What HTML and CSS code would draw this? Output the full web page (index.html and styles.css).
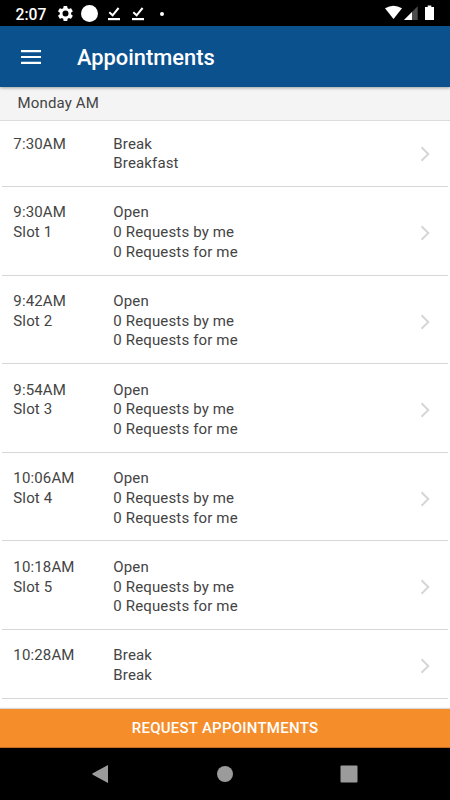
FILE: index.html
```html
<!DOCTYPE html>
<html lang="en">
<head>
<meta charset="utf-8">
<title>Appointments</title>
<link rel="stylesheet" href="styles.css">
</head>
<body>
<div class="phone">
  <div class="status">
    <span class="clock">2:07</span>
    <svg class="gear" viewBox="2 2 20 20"><path fill-rule="evenodd" d="M19.4 13a7.5 7.5 0 0 0 0-2l2.1-1.6c.2-.2.3-.4.1-.7l-2-3.4c-.1-.2-.4-.3-.6-.2l-2.500 1a7.300 7.300 0 0 0-1.700-1l-.4-2.600a.5.5 0 0 0-.5-.5h-4c-.2 0-.5.2-.5.5L9 5.100a7.700 7.700 0 0 0-1.700 1l-2.500-1c-.2-.1-.5 0-.6.2l-2 3.400c-.1.200-.1.500.1.700L4.500 11a7.500 7.500 0 0 0 0 2l-2.200 1.600c-.2.200-.2.400-.1.700l2 3.400c.1.200.4.300.6.200l2.500-1c.5.400 1.100.7 1.700 1l.4 2.600c0 .3.200.5.500.5h4c.3 0 .5-.2.500-.5l.4-2.600c.6-.3 1.200-.6 1.700-1l2.500 1c.2.100.5 0 .6-.2l2-3.400c.1-.2.100-.5-.1-.7zM12 8a4 4 0 1 1 0 8 4 4 0 0 1 0-8z"/></svg>
    <i class="disc"></i>
    <svg class="done" viewBox="0 0 12 14"><path d="M1.300 5.300l3.300 3 6-7.300" fill="none" stroke="#fff" stroke-width="2"/><path d="M0 11h12v2.200H0z"/></svg>
    <svg class="done second" viewBox="0 0 12 14"><path d="M1.300 5.300l3.300 3 6-7.300" fill="none" stroke="#fff" stroke-width="2"/><path d="M0 11h12v2.200H0z"/></svg>
    <i class="dot"></i>
    <svg class="signals" viewBox="0 0 50 16"><path d="M0 3.300Q8.500-1.900 17 3.300L8.500 14z"/><path d="M19 15L32.700 1.300V15z" fill="#4d4d4d"/><path d="M19 15l8-8v8z"/><path d="M40 2h2.700V.5h3.600V2H49v13h-9z"/></svg>
  </div>
  <header class="appbar">
    <svg class="menu" viewBox="0 0 20 14"><path d="M0 0h20v2.200H0zM0 5.900h20v2.200H0zM0 11.800h20V14H0z"/></svg>
    <h1>Appointments</h1>
  </header>
  <div class="section">Monday AM</div>
  <main class="list">
    <div class="row first"><div class="time">7:30AM</div><div class="info">Break<br>Breakfast</div><svg class="chevron" viewBox="0 0 10 16"><path d="M1.500 1.200L8.300 8l-6.800 6.800"/></svg></div>
    <div class="row"><div class="time">9:30AM<br>Slot 1</div><div class="info">Open<br>0 Requests by me<br>0 Requests for me</div><svg class="chevron" viewBox="0 0 10 16"><path d="M1.500 1.200L8.300 8l-6.800 6.800"/></svg></div>
    <div class="row"><div class="time">9:42AM<br>Slot 2</div><div class="info">Open<br>0 Requests by me<br>0 Requests for me</div><svg class="chevron" viewBox="0 0 10 16"><path d="M1.500 1.200L8.300 8l-6.800 6.800"/></svg></div>
    <div class="row"><div class="time">9:54AM<br>Slot 3</div><div class="info">Open<br>0 Requests by me<br>0 Requests for me</div><svg class="chevron" viewBox="0 0 10 16"><path d="M1.500 1.200L8.300 8l-6.800 6.800"/></svg></div>
    <div class="row"><div class="time">10:06AM<br>Slot 4</div><div class="info">Open<br>0 Requests by me<br>0 Requests for me</div><svg class="chevron" viewBox="0 0 10 16"><path d="M1.500 1.200L8.300 8l-6.800 6.800"/></svg></div>
    <div class="row"><div class="time">10:18AM<br>Slot 5</div><div class="info">Open<br>0 Requests by me<br>0 Requests for me</div><svg class="chevron" viewBox="0 0 10 16"><path d="M1.500 1.200L8.300 8l-6.800 6.800"/></svg></div>
    <div class="row"><div class="time">10:28AM</div><div class="info">Break<br>Break</div><svg class="chevron" viewBox="0 0 10 16"><path d="M1.500 1.200L8.300 8l-6.800 6.800"/></svg></div>
  </main>
  <button class="request">REQUEST APPOINTMENTS</button>
  <nav class="navbar">
    <svg viewBox="0 0 18 18"><path d="M16 0v18L.8 9.800a.9.9 0 0 1 0-1.600z"/></svg>
    <svg viewBox="0 0 18 18"><circle cx="9" cy="9" r="8"/></svg>
    <svg viewBox="0 0 18 18"><rect x=".5" y=".5" width="17" height="17" rx="1"/></svg>
  </nav>
</div>
</body>
</html>
```
FILE: styles.css
```css
* { box-sizing: border-box; }
body { margin: 0; background: #fff; font-family: Roboto, sans-serif; color: #444; }
svg { display: block; fill: #fff; flex: none; }
.phone { width: 450px; height: 800px; display: flex; flex-direction: column; overflow: hidden; }
.status { flex: none; height: 26px; background: #000; color: #fff; display: flex; align-items: center; padding: 1px 16px 0 15.500px; }
.clock { width: 42.500px; font-size: 15.700px; font-weight: 500; line-height: 26px; padding-top: 2px; }
.gear { width: 15px; height: 15px; }
.disc { width: 17px; height: 17px; border-radius: 50%; background: #fff; margin-left: 8px; }
.done { width: 12px; height: 14px; margin-left: 10px; }
.done.second { margin-left: 12px; }
.dot { width: 4px; height: 4px; border-radius: 50%; background: #fff; margin-left: 16px; }
.signals { width: 50px; height: 16px; margin: -1px -1px 0 auto; }
.appbar { flex: none; height: 61px; background: #0b518d; color: #fff; display: flex; align-items: center; padding-left: 21px; position: relative; box-shadow: 0 1px 3px rgba(0,0,0,.35); }
.menu { width: 20px; height: 14px; }
h1 { margin: 0 0 0 36px; font-size: 21.850px; font-weight: 500; line-height: 30px; padding-top: 2px; }
.section { flex: none; height: 34.300px; background: #f4f4f4; border-bottom: 1px solid #ddd; padding-left: 17.500px; font-size: 15px; line-height: 32px; letter-spacing: .15px; }
.list { flex: 1; min-height: 0; overflow: hidden; padding: 0 2px; }
.row { display: flex; align-items: center; border-bottom: 1px solid #d8d8d8; padding: 16.400px 18px 12.100px 11.300px; font-size: 15px; line-height: 19.700px; letter-spacing: .15px; }
.row.first { padding-top: 13.300px; }
.time { width: 100px; align-self: flex-start; }
.info { flex: 1; }
.chevron { width: 10px; height: 16px; fill: none; stroke: #d6d6d6; stroke-width: 2; }
.request { flex: none; height: 39px; border: 0; border-bottom: 1px solid #c36c1c; background: #f58d2b; color: #fff; font: 500 15px Roboto, sans-serif; letter-spacing: .25px; padding: 0; box-shadow: 0 -1px 1px rgba(0,0,0,.15); position: relative; }
.navbar { flex: none; height: 52px; background: #000; display: flex; justify-content: center; gap: 106px; align-items: center; padding: 0 1px 1px 0; }
.navbar svg { width: 18px; height: 18px; fill: #9b9b9b; }
```
